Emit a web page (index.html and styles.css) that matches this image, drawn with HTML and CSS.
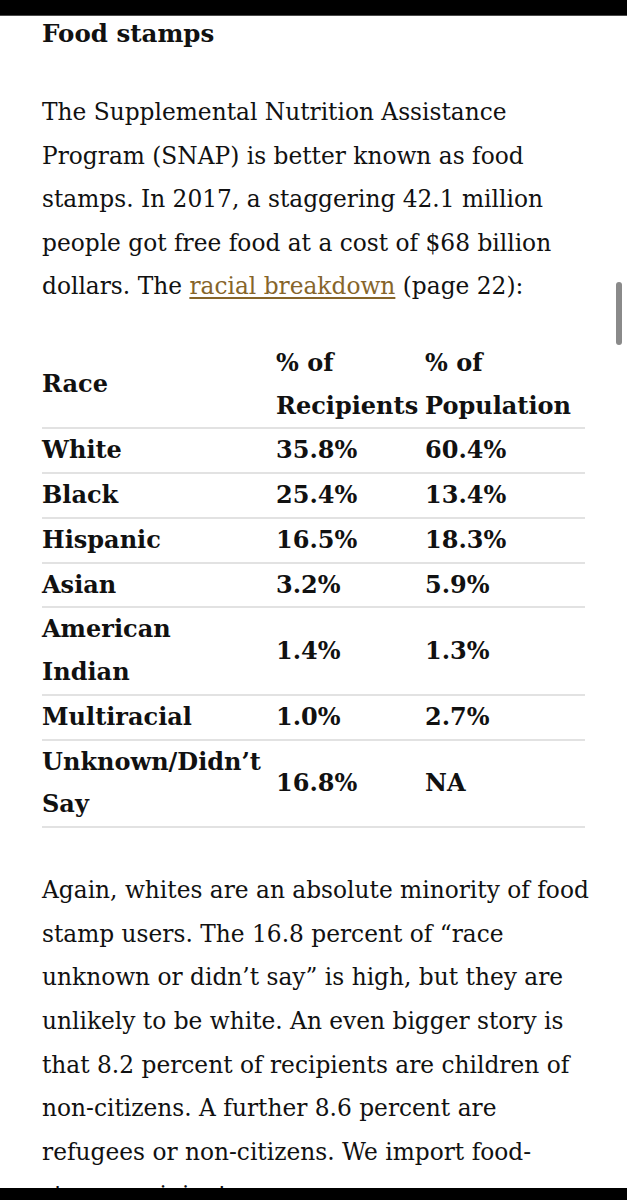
FILE: index.html
```html
<!DOCTYPE html>
<html lang="en">
<head>
<meta charset="utf-8">
<title>Food stamps</title>
<link rel="stylesheet" href="styles.css">
</head>
<body>
<div class="status-bar"></div>
<article class="article">
  <h2 class="section-title">Food stamps</h2>
  <p class="para intro">The Supplemental Nutrition Assistance Program (SNAP) is better known as food stamps. In 2017, a staggering 42.1 million people got free food at a cost of $68 billion dollars. The <a class="link" href="#">racial breakdown</a> (page 22):</p>
  <table class="data-table">
    <colgroup>
      <col class="col-race">
      <col class="col-rec">
      <col class="col-pop">
    </colgroup>
    <thead>
      <tr><th class="cell race">Race</th><th class="cell">% of Recipients</th><th class="cell">% of Population</th></tr>
    </thead>
    <tbody>
      <tr><td class="cell race">White</td><td class="cell">35.8%</td><td class="cell">60.4%</td></tr>
      <tr><td class="cell race">Black</td><td class="cell">25.4%</td><td class="cell">13.4%</td></tr>
      <tr><td class="cell race">Hispanic</td><td class="cell">16.5%</td><td class="cell">18.3%</td></tr>
      <tr><td class="cell race">Asian</td><td class="cell">3.2%</td><td class="cell">5.9%</td></tr>
      <tr><td class="cell race">American Indian</td><td class="cell">1.4%</td><td class="cell">1.3%</td></tr>
      <tr><td class="cell race">Multiracial</td><td class="cell">1.0%</td><td class="cell">2.7%</td></tr>
      <tr><td class="cell race">Unknown/Didn’t Say</td><td class="cell">16.8%</td><td class="cell">NA</td></tr>
    </tbody>
  </table>
  <p class="para outro">Again, whites are an absolute minority of food stamp users. The 16.8 percent of “race unknown or didn’t say” is high, but they are unlikely to be white. An even bigger story is that 8.2 percent of recipients are children of non-citizens. A further 8.6 percent are refugees or non-citizens. We import food-stamp recipients.</p>
</article>
<div class="scroll-thumb"></div>
<div class="home-bar"></div>
</body>
</html>
```

FILE: styles.css
```css
html, body {
  margin: 0;
  padding: 0;
  background: #ffffff;
}

body {
  font-family: "DejaVu Serif", "Liberation Serif", serif;
  color: #111111;
  overflow: hidden;
}

.article {
  padding: 12px 42px 0 42px;
}

.section-title {
  margin: 0;
  font-size: 24.5px;
  line-height: 44px;
  font-weight: bold;
}

.para {
  margin: 0;
  font-size: 23.3px;
  line-height: 43.6px;
}

.intro {
  margin-top: 34px;
}

.outro {
  margin-top: 40px;
  margin-right: -14px;
}

.link {
  color: #86652a;
  text-decoration: underline;
  text-decoration-thickness: 1.5px;
  text-underline-offset: 3px;
}

.data-table {
  margin-top: 34px;
  width: 543px;
  border-collapse: collapse;
  table-layout: fixed;
  font-size: 24px;
  line-height: 42.75px;
  font-weight: bold;
}

.col-race { width: 234px; }
.col-rec { width: 149px; }
.col-pop { width: 160px; }

.cell {
  padding: 0;
  text-align: left;
  vertical-align: middle;
  font-weight: bold;
  border-bottom: 2px solid #e2e2e2;
}

.cell.race {
  padding-right: 13px;
}

.status-bar {
  position: fixed;
  top: 0;
  left: 0;
  right: 0;
  height: 15px;
  background: #000000;
  border-bottom: 1px solid #4a4a4a;
  z-index: 5;
}

.home-bar {
  position: fixed;
  left: 0;
  right: 0;
  bottom: 0;
  height: 12px;
  background: #000000;
  z-index: 5;
}

.scroll-thumb {
  position: fixed;
  left: 616px;
  top: 282px;
  width: 6px;
  height: 63px;
  border-radius: 3px;
  background: #8a8a8a;
  z-index: 4;
}
```
